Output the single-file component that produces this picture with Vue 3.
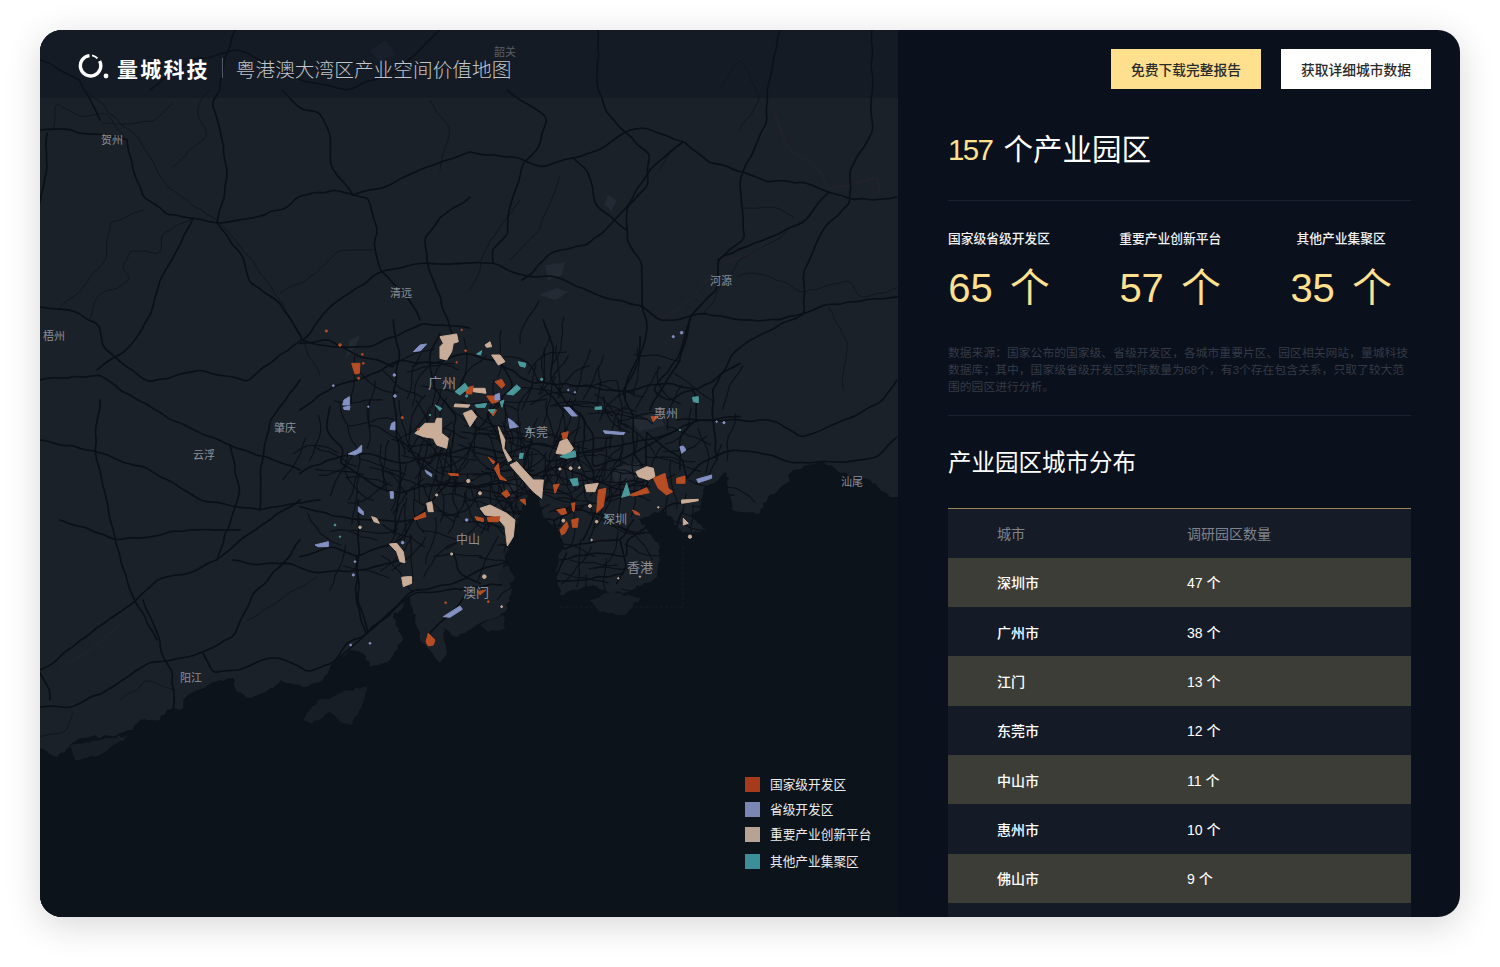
<template>
  <div class="page">
    <div class="window">
      <section class="map-pane">
        <svg class="map" viewBox="40 30 858 887" width="858" height="887">
          <rect class="land" x="40" y="30" width="858" height="887" />
          <path v-for="(d, i) in blobPaths" :key="'b' + i" class="blob" :d="d" />
          <path v-for="(d, i) in thinPaths" :key="'t' + i" class="road-thin" :d="d" />
          <path v-for="(d, i) in brownPaths" :key="'w' + i" class="road-brown" :d="d" />
          <path v-for="(d, i) in mainPaths" :key="'m' + i" class="road" :d="d" />
          <g transform="translate(300 320) scale(.3333)">
            <path v-for="(d, i) in cityPaths" :key="'c' + i" class="road-city" :d="d" />
          </g>
          <path v-for="(d, i) in localRoads" :key="'l' + i" class="road-local" :d="d" />
          <path class="sea" :d="coastPath" />
          <path v-for="(d, i) in islandPaths" :key="'i' + i" class="island" :d="d" />
          <path class="hk-border" d="M560 607H683V547" />
          <g transform="translate(300 320) scale(.3333)">
            <template v-for="group in patches" :key="group.cls">
              <polygon v-for="(p, i) in group.shapes" :key="i" :class="group.cls" :points="p" />
              <circle v-for="(d, i) in group.dots" :key="'d' + i" :class="group.cls" :cx="d[0]" :cy="d[1]" :r="d[2] * 0.55" />
            </template>
          </g>
          <text
            v-for="l in labels"
            :key="l.name"
            class="place"
            :x="l.x"
            :y="l.y"
            :font-size="l.size || 11"
          >{{ l.name }}</text>
        </svg>

        <header class="map-header">
          <svg class="logo" width="32" height="30" viewBox="0 0 32 30">
            <path class="logo-ring" d="M11.5 2.6A10.2 10.2 0 1 0 21.6 8" />
            <path class="logo-ring thin" d="M14 2.4A10.2 10.2 0 0 1 19.5 5.4" />
            <circle class="logo-dot" cx="28" cy="23" r="2.4" />
          </svg>
          <span class="brand">量城科技</span>
          <span class="header-line"></span>
          <span class="subtitle">粤港澳大湾区产业空间价值地图</span>
        </header>

        <ul class="legend">
          <li v-for="item in legend" :key="item.name">
            <i :class="item.cls"></i><span>{{ item.name }}</span>
          </li>
        </ul>
      </section>

      <aside class="panel">
        <div class="actions">
          <button class="btn btn-yellow">免费下载完整报告</button>
          <button class="btn btn-white">获取详细城市数据</button>
        </div>

        <h1 class="total"><span>157</span> 个产业园区</h1>

        <div class="stats">
          <div v-for="s in stats" :key="s.name" class="stat">
            <div class="stat-name">{{ s.name }}</div>
            <div class="stat-value">{{ s.value }} 个</div>
          </div>
        </div>

        <p class="note">
          数据来源&#xFF1A;国家公布的国家级、省级开发区&#xFF0C;各城市重要片区、园区相关网站&#xFF0C;量城科技<br />
          数据库&#xFF1B;其中&#xFF0C;国家级省级开发区实际数量为68个&#xFF0C;有3个存在包含关系&#xFF0C;只取了较大范<br />
          围的园区进行分析。
        </p>

        <h2 class="section-title">产业园区城市分布</h2>

        <div class="table">
          <div class="row head">
            <span>城市</span>
            <span>调研园区数量</span>
          </div>
          <div v-for="c in cities" :key="c.name" class="row">
            <span>{{ c.name }}</span>
            <span>{{ c.count }} 个</span>
          </div>
        </div>
      </aside>
    </div>
  </div>
</template>

<script setup>
const legend = [
  { name: '国家级开发区', cls: 'sw-red' },
  { name: '省级开发区', cls: 'sw-blue' },
  { name: '重要产业创新平台', cls: 'sw-pale' },
  { name: '其他产业集聚区', cls: 'sw-teal' },
];

const stats = [
  { name: '国家级省级开发区', value: 65 },
  { name: '重要产业创新平台', value: 57 },
  { name: '其他产业集聚区', value: 35 },
];

const cities = [
  { name: '深圳市', count: 47 },
  { name: '广州市', count: 38 },
  { name: '江门', count: 13 },
  { name: '东莞市', count: 12 },
  { name: '中山市', count: 11 },
  { name: '惠州市', count: 10 },
  { name: '佛山市', count: 9 },
];

const labels = [
  { name: '韶关', x: 494, y: 56 },
  { name: '贺州', x: 101, y: 144 },
  { name: '清远', x: 390, y: 297 },
  { name: '河源', x: 710, y: 285 },
  { name: '梧州', x: 43, y: 340 },
  { name: '广州', x: 428, y: 388, size: 14 },
  { name: '惠州', x: 654, y: 418, size: 12 },
  { name: '肇庆', x: 274, y: 432 },
  { name: '东莞', x: 524, y: 437, size: 12 },
  { name: '云浮', x: 193, y: 459 },
  { name: '汕尾', x: 841, y: 486 },
  { name: '深圳', x: 603, y: 524, size: 12 },
  { name: '中山', x: 456, y: 544, size: 12 },
  { name: '香港', x: 627, y: 572, size: 13 },
  { name: '澳门', x: 463, y: 597, size: 13 },
  { name: '阳江', x: 180, y: 682 },
];

const mainRoads = [
  '127,140 133,170 143,197 167,215 193,218 217,223 257,217 288,207 297,197 333,190 353,195 368,198 377,227 375,250 380,270 407,297 420,320',
  '193,218 177,250 160,280 153,307 140,333 123,353 97,370',
  '217,223 222,203 227,170 220,130 212,103 220,90 224,60 235,30',
  '217,223 243,257 250,283 280,303 303,340 263,367 247,382 200,370 150,382 127,367 103,347 97,323 70,310 40,307',
  '303,340 333,347 370,347 423,323 470,328',
  '303,340 330,307 350,293 380,272 427,263 470,263',
  '282,90 303,110 320,113 330,133 330,163 353,195',
  '470,152 427,167 383,188 353,195',
  '470,197 440,217 425,237 427,263 437,290 453,337',
  '40,130 60,129 95,134 127,140',
  '47,133 47,170 40,203',
  '470,152 520,158 543,167 573,158 603,148 625,132 647,128 685,142 710,163 743,172 767,182 803,182 823,190 852,200 897,197',
  '507,90 547,118 537,150 523,163 510,207 508,233 492,250 493,263',
  '470,263 493,263 523,275 560,278 593,293 613,300 640,305 660,320 677,320 703,313 740,320 780,320 805,313 823,305 900,297',
  '598,30 598,90 607,113 625,132 650,155 647,187 627,207 627,240 642,263 642,303 647,330 642,350 627,380 625,400',
  '573,158 587,170 597,207 627,230',
  '683,142 652,167 627,207 613,222 587,245 550,253 533,273 522,280',
  '780,30 767,90 767,123 743,172 740,180 745,237 718,260 717,290 690,317 680,360 663,387 650,410',
  '872,30 872,133 850,170 850,203 823,230 803,273 805,313 757,337 733,353 712,390 713,420',
  '828,193 803,223 747,247 718,260',
  '40,670 73,647 127,607 157,580 190,573 217,560 240,540 270,520 300,500',
  '143,600 157,633 163,657 173,673 173,710',
  '40,707 70,708 107,690 150,662 190,657 233,637 253,593 280,567 300,540',
  '203,653 213,673 240,670 267,658 280,658 307,672 333,663 347,643 368,633 410,592 450,585 473,573 510,560',
  '358,500 358,560 358,603 368,632',
  '233,560 257,565 290,563 317,573 357,570 400,560',
  '430,633 460,603 470,590',
  '40,673 50,690 50,700',
  '687,478 700,463 733,450 773,455 793,463 837,462 877,457 897,437',
  '647,433 683,460 687,478',
  '677,420 713,420 740,420 777,422 800,437 853,417 883,400 897,380',
  '713,420 717,460',
  '560,560 593,553 627,557 627,540 647,527 673,503 700,500',
  '583,540 603,500 647,487 647,433',
  '580,413 593,433 593,467 627,457 677,430',
  '150,90 190,60 240,50 300,80 345,90 400,70 440,30',
  '40,60 80,80 100,120',
  '40,380 100,375 130,395 170,420 230,445 300,470',
  '40,440 90,450 150,470 200,500 260,510 320,500',
  '60,520 120,540 190,530 240,530',
  '100,400 95,450 110,520 130,590 157,640',
  '230,445 240,490 217,560',
  '300,380 270,420 260,470 260,510',
];

const thinRoads = [
  '85,90 140,140 167,187 220,223 243,250 280,300 303,340 320,375',
  '173,167 207,137 197,110 210,90',
  '373,250 340,250 317,273 280,293',
  '193,218 163,233 160,253 130,250 123,270 130,280 97,297 90,320',
  '143,210 110,222 107,257 83,287 60,307',
  '53,130 57,103 83,117 107,113 127,140',
  '103,123 153,122 173,103',
  '743,208 773,207 793,217',
  '737,277 753,273 787,282 803,293 847,280 863,298 900,287',
  '828,307 848,343 843,390',
  '703,315 737,263 770,243 803,220',
  '247,620 317,577',
  '73,713 67,730 40,737',
  '120,700 150,680 175,690',
  '720,90 740,60 760,100 740,130',
  '430,100 450,130 440,170',
  '520,200 490,240 470,290',
  '560,175 540,230 510,260',
  '670,150 660,170',
];

const brownRoads = [
  '773,110 787,147 820,170 828,190 877,177 880,193',
  '660,320 690,300 720,265 770,245',
  '60,668 90,650 125,620',
];

const cityRoads = [
  '0,270 100,200 200,170 300,120 400,130 500,100 600,130 700,190 800,190 960,215 1100,190 1190,210 1320,130',
  '0,460 80,420 200,400 300,430 400,410 520,380 620,400 720,370 820,400 950,380 1080,350 1200,300 1320,290',
  '90,260 80,330 130,390 120,430 230,500 300,520 380,490 500,500 600,490',
  '0,710 100,680 170,710 300,660 340,600 400,540 450,480 450,400 470,290 400,200 390,100 420,40',
  '170,710 170,850 200,940 110,1020',
  '200,940 280,870 340,820 440,810 530,800 620,790 720,780 850,780 970,760',
  '330,600 250,600 100,590 0,560',
  '730,0 760,80 750,170 800,250 850,290 850,400 880,450 900,560',
  '1020,50 1020,120 970,210 1000,300 1000,400 1050,470',
  '1170,0 1130,120 1060,210 1100,240 1180,210 1190,300 1140,350 1140,450',
  '600,130 640,200 560,280 590,340 620,410 700,470 780,440 840,460 960,510 1040,480',
  '280,0 300,100 280,230 290,330 300,430 300,520 280,640',
  '850,560 760,600 790,690 850,670 960,660 1000,600',
  '800,700 760,780 780,840 830,870',
  '960,660 980,740 950,790',
  '0,70 90,60 160,100 280,140',
  '460,700 480,760 540,790',
  '600,500 640,580 700,600 760,600',
];

const coast = [
  '40,748 57,757 77,740 90,737 117,735 133,730 140,720 160,720 167,710 183,708 183,700 197,690 220,680 233,678 237,692 250,698',
  '273,688 280,680 307,687 323,680 333,663 350,650 363,653 370,667 390,660 403,640 393,617 410,597 417,627 423,643 440,663 447,653',
  '443,627 457,637 470,630 487,620 505,612 512,590 503,570 508,550 520,515 530,490 540,497 543,517 560,533 563,547',
  '556,570 560,595 593,585 607,592 627,592 657,577 660,547 640,520 663,510 683,533 707,530 690,515 700,510 703,490 727,472 732,510',
  '760,513 763,503 787,483 793,470 823,462 840,473 870,480 890,497',
].join(' ');

const islands = [
  '303,720 318,700 333,697 345,690 367,687 362,705 352,725 340,722 330,712 312,724',
  '590,600 610,592 640,598 625,615 600,612',
  '497,575 508,565 515,578 505,590',
  '480,625 503,615 505,628 488,632',
  '70,745 110,738 130,735 100,755 75,760',
];

const blobs = [
  '360,335 350,340 345,360 355,348',
  '545,265 565,262 562,275 548,280',
  '540,295 556,288 570,292 555,300',
  '608,195 616,200 612,212 604,205',
  '630,420 660,412 665,425 640,432',
  '610,470 640,462 638,478 615,482',
  '500,490 515,480 520,492 508,500',
  '370,50 385,40 395,55 380,62',
];

const patches = [
  {
    cls: 'p-pale',
    shapes: [
      '420,50 470,42 475,65 460,70 455,95 440,120 420,115 420,80 430,70',
      '575,105 600,105 615,125 595,135',
      '555,75 570,65 575,80 560,82',
      '345,340 375,310 405,310 410,295 425,295 425,340 445,355 440,385 410,375 400,355 370,350',
      '595,320 615,360 612,385 635,420 625,425 610,390',
      '630,435 650,425 700,480 730,480 725,535 700,515',
      '540,565 570,555 620,580 645,600 640,650 622,678 615,620 590,590 555,585',
      '768,400 780,365 800,355 820,385 805,405',
      '1008,455 1040,440 1060,445 1065,470 1045,480 1015,470',
      '855,495 895,490 885,515 860,515',
      '268,672 290,670 310,695 315,728 300,725 290,695',
      '380,550 395,545 400,575 385,575',
      '1145,540 1195,538 1195,542 1160,548 1145,550',
      '305,772 320,770 335,770 335,790 310,800',
      '490,280 515,270 530,290 510,320 500,300',
      '520,205 555,205 558,220 520,215',
      '465,252 510,255 505,262 462,260',
      '215,590 230,595 238,610 222,605',
      '1150,595 1165,610 1150,615',
    ],
    dots: [[505, 483, 9], [540, 520, 8], [410, 525, 6], [180, 622, 7], [455, 702, 6], [553, 770, 10], [812, 445, 8], [780, 447, 6], [838, 443, 5], [870, 558, 8], [790, 602, 8], [890, 605, 7], [955, 775, 4], [1020, 770, 4], [1075, 562, 4], [1170, 650, 9], [875, 660, 4], [605, 860, 5]],
  },
  {
    cls: 'p-red',
    shapes: [
      '155,130 180,130 178,160 165,162',
      '585,185 605,178 615,195 605,205',
      '495,205 520,198 515,222 500,222',
      '560,228 585,228 595,245 575,250',
      '565,270 590,270 580,288',
      '565,412 585,425 580,432',
      '583,445 595,430 600,465 620,482 600,478',
      '605,520 620,510 630,525 618,533',
      '660,540 675,537 677,555',
      '760,495 778,492 765,520',
      '770,570 795,565 800,580 785,585',
      '780,630 800,605 805,620 795,640 785,645',
      '815,550 825,548 822,575 818,572',
      '815,600 835,595 832,622 818,622',
      '895,510 918,505 910,560 890,578',
      '990,525 1040,503 1048,518 1000,528',
      '1060,475 1095,460 1105,505 1118,515 1100,525 1075,505',
      '1130,475 1155,468 1155,490 1130,490',
      '1053,290 1075,290 1060,305',
      '785,340 805,335 800,355 790,358',
      '378,965 385,940 405,960 400,975 385,978',
      '342,595 375,577 378,590 345,600',
      '525,590 550,595 550,605 530,600',
      '562,592 600,590 595,605 565,605',
      '445,460 475,462 475,467 450,466',
      '997,570 1015,578 1020,586 1005,582',
      '533,815 558,810 540,825',
    ],
    dots: [[79, 33, 6], [120, 75, 7], [187, 103, 5], [190, 130, 5], [176, 175, 6], [307, 293, 6], [485, 30, 4], [470, 127, 4], [497, 92, 5], [355, 328, 5], [437, 848, 5], [565, 845, 5]],
  },
  {
    cls: 'p-blue',
    shapes: [
      '340,95 360,75 380,72 362,92',
      '132,240 148,230 148,255 128,255',
      '130,262 150,258 148,270 132,268',
      '145,402 170,390 185,375 185,395 165,405',
      '792,262 808,262 832,288 815,288',
      '910,332 975,338 970,344 915,340',
      '625,295 640,305 655,320 630,325',
      '1190,478 1235,465 1235,475 1195,488',
      '1140,380 1150,378 1158,390 1145,400',
      '430,890 480,858 487,868 450,892',
      '45,675 85,665 85,680 55,680',
      '585,225 598,220 600,240 585,240',
      '270,515 280,515 280,535 272,535',
      '175,560 190,575 190,585 175,575',
      '275,310 285,305 285,330 270,328',
      '375,450 395,462 395,470 380,460',
    ],
    dots: [[100, 197, 5], [283, 165, 7], [285, 228, 7], [205, 260, 4], [500, 600, 7], [1120, 50, 6], [1145, 38, 7], [1250, 305, 4], [1272, 308, 6], [308, 668, 7], [165, 725, 5], [160, 765, 6], [210, 970, 5], [152, 975, 5], [805, 210, 4], [825, 217, 4]],
  },
  {
    cls: 'p-teal',
    shapes: [
      '620,222 650,195 662,205 640,225',
      '465,215 495,190 505,205 480,225',
      '780,410 825,392 828,410 800,415',
      '810,478 832,475 835,495 820,498',
      '965,532 980,490 990,525',
      '660,400 670,400 668,415 658,415',
      '1178,232 1195,230 1195,248 1180,245',
      '885,262 905,260 905,268 885,268',
      '655,125 678,130 675,142 660,138',
      '530,102 545,92 542,105',
      '525,255 560,250 555,262 530,262',
      '565,270 585,268 578,280',
      '405,255 425,265 420,272',
      '600,245 612,240 606,262',
    ],
    dots: [[725, 178, 6], [690, 330, 7], [920, 590, 8], [1140, 330, 4], [500, 228, 6], [390, 285, 4], [105, 615, 5], [120, 650, 4]],
  },
];

// 路网和海岸线的细节用固定种子生成
let seed = 20190;
const rand = () => {
  seed = (seed * 16807) % 2147483647;
  return seed / 2147483647;
};

const toPoints = (str) => str.trim().split(/\s+/).map((p) => p.split(',').map(Number));

const wiggle = (pts, step, amp) => {
  const out = [pts[0]];
  for (let i = 1; i < pts.length; i++) {
    const [ax, ay] = pts[i - 1];
    const [bx, by] = pts[i];
    const n = Math.max(1, Math.round(Math.hypot(bx - ax, by - ay) / step));
    for (let k = 1; k <= n; k++) {
      const t = k / n;
      const dx = k === n ? 0 : (rand() - 0.5) * amp;
      const dy = k === n ? 0 : (rand() - 0.5) * amp;
      out.push([ax + (bx - ax) * t + dx, ay + (by - ay) * t + dy]);
    }
  }
  return out;
};

const smooth = (str, step = 9, amp = 3) => {
  const pts = wiggle(toPoints(str), step, amp);
  let d = `M${pts[0][0]} ${pts[0][1]}`;
  for (let i = 1; i < pts.length - 1; i++) {
    const mx = ((pts[i][0] + pts[i + 1][0]) / 2).toFixed(1);
    const my = ((pts[i][1] + pts[i + 1][1]) / 2).toFixed(1);
    d += `Q${pts[i][0].toFixed(1)} ${pts[i][1].toFixed(1)} ${mx} ${my}`;
  }
  const last = pts[pts.length - 1];
  return `${d}L${last[0]} ${last[1]}`;
};

const rough = (str, step = 4, amp = 3, tail = '') => {
  const pts = wiggle(toPoints(str), step, amp);
  return `M${pts.map((p) => `${p[0].toFixed(1)} ${p[1].toFixed(1)}`).join('L')}${tail}Z`;
};

const makeLocalRoads = () => {
  const list = [];
  for (let i = 0; i < 300; i++) {
    let x = 510 + (rand() + rand() - 1) * 240;
    let y = 465 + (rand() + rand() - 1) * 130;
    let angle = Math.floor(rand() * 4) * (Math.PI / 2) + 0.2;
    let d = `M${x.toFixed(1)} ${y.toFixed(1)}`;
    for (let s = 0; s < 6; s++) {
      angle += (rand() - 0.5) * 0.8;
      x += Math.cos(angle) * 8;
      y += Math.sin(angle) * 8;
      d += `L${x.toFixed(1)} ${y.toFixed(1)}`;
    }
    list.push(d);
  }
  return list;
};

const mainPaths = mainRoads.map((r) => smooth(r));
const thinPaths = thinRoads.map((r) => smooth(r, 8, 4));
const brownPaths = brownRoads.map((r) => smooth(r, 10, 2));
const cityPaths = cityRoads.map((r) => smooth(r, 24, 10));
const localRoads = makeLocalRoads();
const coastPath = rough(coast, 4, 3.5, 'L898 497L898 917L40 917');
const islandPaths = islands.map((b) => rough(b, 4, 3));
const blobPaths = blobs.map((b) => rough(b, 4, 2));
</script>

<style scoped>
.page {
  width: 1500px;
  height: 967px;
  padding: 30px 40px 50px;
  box-sizing: border-box;
  background: #fff;
  font-family: "Liberation Sans", "Noto Sans CJK SC", sans-serif;
}

.window {
  display: flex;
  height: 100%;
  border-radius: 22px;
  overflow: hidden;
  background: #0a101c;
  box-shadow: 0 8px 36px rgba(0, 0, 0, 0.16);
}

.map-pane {
  position: relative;
  width: 858px;
  flex: none;
  background: #1b2129;
}

.map {
  display: block;
}

.land {
  fill: #1b2129;
}

.blob {
  fill: #232a34;
}

.sea {
  fill: #0c131b;
}

.island {
  fill: #181e26;
}

.road,
.road-thin,
.road-brown,
.road-city,
.road-local {
  fill: none;
  stroke-linecap: round;
  stroke-linejoin: round;
}

.road {
  stroke: #0b0f16;
  stroke-width: 1.6;
}

.road-thin {
  stroke: #10151e;
  stroke-width: 0.9;
}

.road-brown {
  stroke: #2a2428;
  stroke-width: 0.9;
}

.road-city {
  stroke: #0b0f16;
  stroke-width: 4.8;
}

.road-local {
  stroke: #0c1018;
  stroke-width: 1.1;
}

.hk-border {
  fill: none;
  stroke: #171c24;
  stroke-width: 1;
  stroke-dasharray: 3 2;
}

.p-pale,
.p-red,
.p-blue,
.p-teal {
  stroke-width: 3;
  stroke-linejoin: round;
}

.p-pale {
  fill: #c9ad98;
  stroke: #c9ad98;
}

.p-red {
  fill: #b84c22;
  stroke: #b84c22;
}

.p-blue {
  fill: #8391c4;
  stroke: #8391c4;
}

.p-teal {
  fill: #4a9a9c;
  stroke: #4a9a9c;
}

.place {
  fill: #8b9098;
  font-family: "Liberation Sans", "Noto Sans CJK SC", sans-serif;
}

.map-header {
  position: absolute;
  top: 0;
  left: 0;
  right: 0;
  height: 68px;
  display: flex;
  align-items: center;
  padding: 8px 0 0 38px;
  box-sizing: border-box;
  background: rgba(14, 18, 32, 0.42);
}

.logo {
  flex: none;
  margin-right: 7px;
}

.logo-ring {
  fill: none;
  stroke: #fff;
  stroke-width: 3.4;
}

.logo-ring.thin {
  stroke-width: 1.8;
}

.logo-dot {
  fill: #fff;
}

.brand {
  color: #fff;
  font-size: 21px;
  font-weight: 700;
  letter-spacing: 2.2px;
  white-space: nowrap;
}

.header-line {
  width: 1px;
  height: 20px;
  margin: 0 13px 0 12px;
  background: #565a62;
}

.subtitle {
  color: #c2c5ca;
  font-size: 19.7px;
  font-weight: 300;
  white-space: nowrap;
}

.legend {
  position: absolute;
  left: 705px;
  top: 747px;
  margin: 0;
  padding: 0;
  list-style: none;
  display: flex;
  flex-direction: column;
  gap: 10px;
  color: #ececec;
  font-size: 12.7px;
}

.legend li {
  display: flex;
  align-items: center;
  height: 15px;
}

.legend li:last-child {
  margin-top: 2px;
}

.legend i {
  width: 15px;
  height: 15px;
  margin-right: 10px;
}

.legend span {
  margin-top: -2px;
}

.sw-red {
  background: #a83a1c;
}

.sw-blue {
  background: #7a87b5;
}

.sw-pale {
  background: #b8a294;
}

.sw-teal {
  background: #3c8f99;
}

.panel {
  flex: 1;
  min-width: 0;
  display: flex;
  flex-direction: column;
  padding: 19px 49px 0 50px;
  overflow: hidden;
}

.actions {
  display: flex;
  justify-content: flex-end;
  gap: 20px;
  margin-right: -20px;
}

.btn {
  width: 150px;
  height: 40px;
  padding: 0;
  border: none;
  font-family: inherit;
  font-size: 13.75px;
  font-weight: 500;
  color: #2a2a2a;
}

.btn-yellow {
  background: #ffe08f;
}

.btn-white {
  background: #fff;
}

.total {
  margin: 0;
  padding: 40px 0 29px;
  height: 42px;
  line-height: 42px;
  box-sizing: content-box;
  border-bottom: 1px solid #1a2130;
  font-size: 29.5px;
  font-weight: 400;
  color: #fff;
  white-space: nowrap;
}

.total span {
  margin-right: 3px;
  color: #ffe08f;
  letter-spacing: -1.6px;
}

.stats {
  display: flex;
  justify-content: space-between;
  padding: 29px 19px 0 0;
}

.stat {
  display: flex;
  flex-direction: column;
  align-items: center;
}

.stat-name {
  color: #f2f2f2;
  font-size: 12.75px;
  font-weight: 500;
  line-height: 18px;
  white-space: nowrap;
}

.stat-value {
  margin-top: 15px;
  color: #ffe08f;
  font-size: 40px;
  line-height: 50px;
  word-spacing: 6px;
  white-space: nowrap;
}

.note {
  margin: 32px 0 0;
  padding-bottom: 19px;
  border-bottom: 1px solid #1a2130;
  color: #343a46;
  font-size: 11.8px;
  line-height: 17px;
  white-space: nowrap;
}

.section-title {
  margin: 30px 0 28px;
  color: #fff;
  font-size: 23.5px;
  font-weight: 400;
  line-height: 34px;
  white-space: nowrap;
}

.table {
  flex: 1;
  min-height: 0;
  border-top: 1.5px solid #9a8659;
  background: #141b27;
}

.row {
  display: grid;
  grid-template-columns: 190px 1fr;
  align-items: center;
  height: 49.3px;
  padding-left: 49px;
  color: #fff;
  font-size: 14px;
  font-weight: 500;
}

.row:nth-child(even) {
  background: #3d3d37;
}

.head {
  height: 48.8px;
  color: #7e838c;
  font-weight: 400;
  background: #151b27;
}
</style>
